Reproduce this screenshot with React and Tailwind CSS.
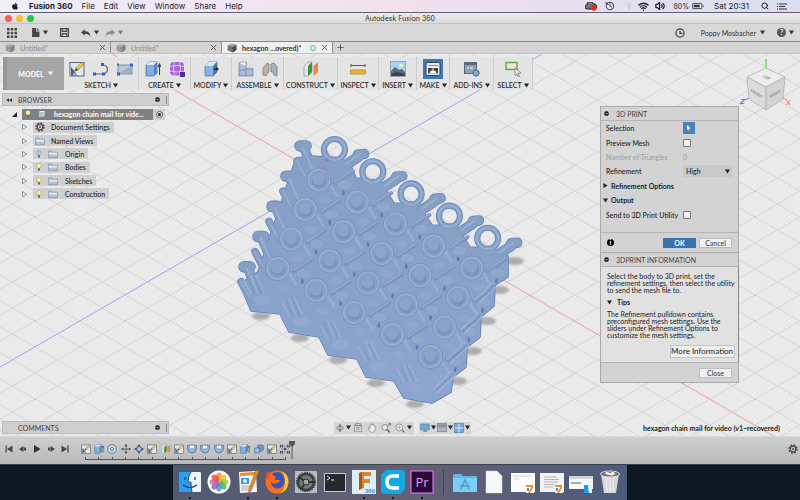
import { FaApple } from "react-icons/fa";
import { LuBluetooth, LuHistory, LuSearch, LuVolume2, LuWifi } from "react-icons/lu";

const Caret = ({ className = "" }) => (
  <svg viewBox="0 0 6 6" className={`w-[5px] h-[5px] shrink-0 ${className}`}>
    <path d="M0 .5h6L3 5.5z" fill="currentColor" />
  </svg>
);

// Every small icon is drawn on a 16 x 16 grid
const shapes = {
  sketch: (
    <>
      <rect x="1" y="1.5" width="14" height="13.5" fill="#dfe6ee" stroke="#5d6b7a" />
      <path d="M2 14.5V6l7 8.5z" fill="#4d6480" />
      <path d="M4 13h8" stroke="#fff" />
      <path d="M6 10l1-3 6-6 2 2-6 6z" fill="#f1c944" stroke="#8a6d1f" strokeWidth=".6" />
      <path d="M6 10l1-3 2 2z" fill="#333" />
    </>
  ),
  curve: (
    <>
      <path d="M1 13h8c7 0 7-9 1-9" fill="none" stroke="#555f70" strokeWidth="1.2" />
      <path d="M0 11.500h3v3H0zM9 11.500h3v3H9zM8 2h3v3H8z" fill="#2d62d0" />
    </>
  ),
  rect: (
    <>
      <rect x="1" y="4" width="14" height="9" fill="#bcc6d6" stroke="#8290a5" />
      <path d="M2 12L14 5v7z" fill="#a3b0c4" />
      <path d="M0 11.500h3v3H0zM13 2.500h3v3h-3zM0 2.500h2v2H0z" fill="#2d62d0" />
    </>
  ),
  extrude: (
    <>
      <path d="M1 4l3-3h8v11l-3 3H1z" fill="#7fb0e2" stroke="#41648c" strokeWidth=".7" />
      <path d="M1 4l3-3h8L9 4z" fill="#d9e9f8" />
      <path d="M9 4l3-3v11l-3 3z" fill="#5587bd" />
      <path d="M14.500 14V4M13 6l1.500-3L16 6" fill="none" stroke="#444" strokeWidth="1.1" />
    </>
  ),
  form: (
    <>
      <rect x="1" y="1" width="14" height="13.500" rx="4" fill="#a765dc" />
      <path d="M1 5.500q7-2 14 0M1 10q7 2 14 0M5.500 1q-2 7 0 13.500M10.500 1q2 7 0 13.500" fill="none" stroke="#e6c8fb" strokeWidth=".9" />
      <path d="M11 11h5v5h-5z" fill="#5a2c82" />
    </>
  ),
  modify: (
    <>
      <path d="M2 5l4-4h8v10l-4 4H2z" fill="#83b4e4" stroke="#4b6d92" strokeWidth=".7" />
      <path d="M2 5l4-4h8l-4 4z" fill="#dbe8f5" />
      <path d="M10 5l4-4v10l-4 4z" fill="#4678ad" />
      <path d="M11 8h4" stroke="#222" strokeWidth="1.400" />
      <path d="M13 6l3 2-3 2z" fill="#222" />
    </>
  ),
  assemble: (
    <>
      <path d="M1 2h7v6h7v7H1z" fill="#a9bfdc" stroke="#66798f" strokeWidth=".7" />
      <path d="M1 2l1-1h7l-1 1v6l1-1h6l-1 1" fill="#e9f0f8" stroke="#66798f" strokeWidth=".5" />
      <path d="M8 9v6M1 9h7" stroke="#66798f" strokeWidth=".7" />
    </>
  ),
  joint: (
    <>
      <path d="M1 14V7l4-5 2 1v7l-3 5z" fill="#c7ad9d" stroke="#707782" strokeWidth=".7" />
      <path d="M9 11V3l3-1 3 4v9l-3-1-1-3z" fill="#a9b2be" stroke="#68727e" strokeWidth=".7" />
    </>
  ),
  construct: (
    <>
      <path d="M1 5l4-4h4v10l-4 4H1z" fill="#e2e5e8" stroke="#808890" strokeWidth=".6" />
      <path d="M5 5l4-4v10l-4 4z" fill="#3f9145" />
      <path d="M10.500 5l4.500-4v10l-4.500 4z" fill="#ec8340" />
    </>
  ),
  inspect: (
    <>
      <path d="M1 4.500h14M1 3v3M15 3v3" stroke="#555" />
      <rect x=".5" y="9" width="15" height="4" fill="#efb72c" stroke="#9d7412" strokeWidth=".6" />
    </>
  ),
  insert: (
    <>
      <rect x=".5" y=".5" width="15" height="15" fill="#a9d2f4" stroke="#9aa3ab" />
      <circle cx="11" cy="4.500" r="1.800" fill="#fff6c8" />
      <path d="M1 10l4-4 4 3 3-1 3 3v4H1z" fill="#5d6873" />
      <path d="M1 13l6-2 8 2v2H1z" fill="#39424b" />
    </>
  ),
  make: (
    <>
      <rect x="1" y="1.500" width="14" height="13" rx="1.500" fill="#eceff1" stroke="#333c45" />
      <path d="M3 4.500h10" stroke="#8a949d" strokeWidth="1.200" />
      <path d="M3 7h10v5.500H3z" fill="#3b4753" />
      <path d="M8 7v3M5 12h6l-1-2H6z" stroke="#fff" strokeWidth=".8" fill="#fff" />
    </>
  ),
  addins: (
    <>
      <rect x=".5" y="1.500" width="12" height="11" fill="#93a0b1" stroke="#5a6675" />
      <path d="M.5 1.500h12V4H.5z" fill="#56687e" />
      <path d="M3 7h2M6 7h3" stroke="#fff" />
      <circle cx="12" cy="12" r="2.700" fill="#c8dcf2" stroke="#4f7cae" strokeWidth="1.400" />
      <path d="M12 8v8M8 12h8" stroke="#4f7cae" strokeWidth=".7" />
    </>
  ),
  select: (
    <>
      <rect x="1" y="1.500" width="11" height="7" fill="none" stroke="#66a636" strokeWidth="1.400" />
      <path d="M10 7l6 5-3 .3 1.500 3-1.300.7-1.500-3-1.700 1.500z" fill="#eee" stroke="#666" strokeWidth=".7" />
    </>
  ),
  move: (
    <>
      <path d="M8 2v12M2 8h12" stroke="#444" strokeWidth="1.300" strokeDasharray="4 1" />
      <path d="M8 0l2.500 3.500h-5zM8 16l2.500-3.500h-5zM0 8l3.500-2.500v5zM16 8l-3.500-2.500v5z" fill="#444" />
    </>
  ),
  orbitMove: (
    <>
      <circle cx="8" cy="8" r="4" fill="#a9c6e8" stroke="#35537b" strokeWidth="1.500" />
      <path d="M8 0l2.500 4h-5zM8 16l2.500-4h-5zM0 8l4-2.500v5zM16 8l-4-2.500v5z" fill="#35537b" />
    </>
  ),
  coil: (
    <>
      <circle cx="8" cy="8" r="6.500" fill="#e7f0fa" stroke="#476aa0" strokeWidth="1.400" />
      <circle cx="8" cy="8" r="3" fill="#cfe1f5" stroke="#476aa0" strokeWidth="1.400" />
    </>
  ),
  cut: (
    <>
      <path d="M1 2h14v6q-1 6-7 6.500Q2 14 1 8z" fill="#8fb7e3" stroke="#3f5f8b" />
      <path d="M4 2h8v4q-1 2-4 2T4 6z" fill="#f1f6fb" stroke="#3f5f8b" strokeWidth=".6" />
    </>
  ),
  combine: (
    <>
      <path d="M6 2q5-2 9 1v6l-4 3H6z" fill="#6c9bd3" stroke="#3f5f8b" />
      <path d="M1 7q4-2 8 0v6q-4 3-8 1z" fill="#9cc0e8" stroke="#3f5f8b" />
    </>
  ),
  pattern: (
    <>
      <path d="M3 3h10v10H3z" fill="none" stroke="#555" strokeDasharray="2 1.500" />
      <path d="M0 1h5v4H0zM11 1h5v4h-5zM0 11h5v4H0zM11 11h5v4h-5zM6 6h4v4H6z" fill="#3c4f68" />
      <path d="M1.500 2.500h2v1h-2zM12.500 2.500h2v1h-2zM1.500 12.500h2v1h-2zM12.500 12.500h2v1h-2z" fill="#dbe7f5" />
    </>
  ),
  folder: (
    <>
      <path d="M1 3h5l1 2h8v9H1z" fill="#b4c1d3" stroke="#6c7a8e" strokeWidth=".8" />
      <path d="M1.500 6h13v3h-13z" fill="#e4ebf3" />
    </>
  ),
  bulb: (
    <>
      <path d="M8 1c6 0 5 5 2.500 9h-5C3 6 2 1 8 1z" fill="#fff2a0" stroke="#8c7d3a" strokeWidth=".8" />
      <path d="M6 10.500h4V15H6z" fill="#666" />
    </>
  ),
  bulbOff: (
    <>
      <path d="M8 1c6 0 5 5 2.500 9h-5C3 6 2 1 8 1z" fill="#a8d0f5" stroke="#55769b" strokeWidth=".8" />
      <path d="M6 10.500h4V15H6z" fill="#666" />
    </>
  ),
  gear: (
    <>
      <circle cx="8" cy="8" r="6" fill="none" stroke="#4c4c4c" strokeWidth="3" strokeDasharray="2.700 2" />
      <circle cx="8" cy="8" r="4.500" fill="none" stroke="#4c4c4c" strokeWidth="2" />
      <circle cx="8" cy="8" r="1.500" fill="#4c4c4c" />
    </>
  ),
  cube: (
    <>
      <path d="M1 4l7-3 7 2v8l-6 4-8-3z" fill="#777" />
      <path d="M1 4l7-3 7 2-6 3z" fill="#a5a5a5" />
      <path d="M9 6l6-3v8l-6 4z" fill="#4c4c4c" />
    </>
  ),
  body: (
    <>
      <path d="M2 4l3-2h9v9l-3 3H2z" fill="#b8c5d4" />
      <path d="M2 4l3-2h9l-3 2z" fill="#f3f6f9" />
    </>
  ),
  grid: <path d="M0 0h4v4H0zM6 0h4v4H6zM12 0h4v4h-4zM0 6h4v4H0zM6 6h4v4H6zM12 6h4v4h-4zM0 12h4v4H0zM6 12h4v4H6zM12 12h4v4h-4z" fill="#444" />,
  file: <path d="M2 0h7v6h6v10H2zM10.500 0L15 4.500h-4.500z" fill="#444" />,
  save: <path d="M1 1h14v14H1zM4 1v5h8V1M4 15v-5h8v5" fill="none" stroke="#444" strokeWidth="2" />,
  undo: <path d="M0 7l6-5v3c6 0 9 3 9 9-2-4-5-5-9-5v3z" fill="#444" />,
  redo: <path d="M16 7l-6-5v3C4 5 1 8 1 14c2-4 5-5 9-5v3z" fill="#8b8b8b" />,
  close: <path d="M2 2l12 12M14 2L2 14" stroke="#555" strokeWidth="2.200" />,
  plus: <path d="M8 1v14M1 8h14" stroke="#555" strokeWidth="2" />,
  clock: (
    <>
      <circle cx="8" cy="8" r="6.500" fill="none" stroke="#444" strokeWidth="2" />
      <path d="M8 4v4.500h4" fill="none" stroke="#444" strokeWidth="1.800" />
    </>
  ),
  minus: (
    <>
      <rect x="1" y="1" width="14" height="14" rx="5" fill="#222" />
      <path d="M4 8h8" stroke="#ccc" strokeWidth="2" />
    </>
  ),
  rewind: <path d="M8 3v10L1 8zM16 3v10L9 8z" fill="#222" />,
  first: <path d="M1 1h2.500v14H1zM15 1v14L4 8z" fill="#444" />,
  prev: <path d="M9 2v12L0 8zM10 5h4v6h-4z" fill="#444" />,
  play: <path d="M2 0l13 8-13 8z" fill="#333" />,
  next: <path d="M7 2v12l9-6zM2 5h4v6H2z" fill="#444" />,
  last: <path d="M12.500 1H15v14h-2.500zM1 1v14l11-7z" fill="#444" />,
  orbit: (
    <>
      <ellipse cx="8" cy="8" rx="7" ry="3" fill="none" stroke="#666" strokeWidth="1.300" />
      <path d="M8 1v14M5.500 4L8 1l2.500 3M5.500 12L8 15l2.500-3" fill="none" stroke="#555" strokeWidth="1.300" />
    </>
  ),
  lookAt: (
    <>
      <rect x="2" y="4" width="12" height="10" fill="#dde2e8" stroke="#77808a" />
      <path d="M4 1h8v3H4zM4 7h8M4 10h8" fill="none" stroke="#77808a" strokeWidth="1.300" />
    </>
  ),
  pan: <path d="M5 9V3q1-1 2 0V1.500q1-1 2 0V3q1-1 2 0v2q1-1 2 0v6q-1 4-4 4-4 0-5-3L1.500 8Q3 6.500 5 9z" fill="#f2f2f2" stroke="#777" />,
  zoom: (
    <>
      <circle cx="6" cy="7" r="4.500" fill="#eef3f8" stroke="#777" strokeWidth="1.400" />
      <path d="M9.500 10.500L14 15" stroke="#555" strokeWidth="2" />
      <path d="M10 5l5-4M12 1h3v3" fill="none" stroke="#444" />
    </>
  ),
  fit: (
    <>
      <circle cx="7" cy="7" r="5.500" fill="#e7eef6" stroke="#8792a0" strokeWidth="1.400" />
      <path d="M11 11l4 4" stroke="#666" strokeWidth="2" />
      <path d="M4 7h6M7 4v6" stroke="#8ba7c6" strokeWidth="1.400" />
    </>
  ),
  monitor: (
    <>
      <rect x="1" y="1.500" width="14" height="9.500" rx="1" fill="#6ba5e2" stroke="#5f7f9f" />
      <path d="M6 11h4l1 3.500H5z" fill="#8190a0" />
    </>
  ),
  display: (
    <>
      <rect x="1" y="1" width="14" height="13" fill="#aeb4ba" stroke="#767c82" />
      <path d="M1.500 2h13v5h-13z" fill="#8d949b" />
    </>
  ),
  viewports: (
    <>
      <rect x="1" y="1" width="14" height="14" fill="#76a8df" stroke="#49709d" />
      <path d="M8 1v14M1 8h14" stroke="#e7f0fa" strokeWidth="1.500" />
    </>
  ),
};

const Icon = ({ name, className = "w-4 h-4" }) => (
  <svg viewBox="0 0 16 16" className={`shrink-0 ${className}`} aria-hidden="true">
    {shapes[name]}
  </svg>
);

const MenuBar = () => (
  <header className="h-[13px] shrink-0 flex items-center justify-between pl-[11px] pr-[13px] text-[8px] leading-none text-[#1d1c28] border-b border-[#625c78] bg-linear-to-r from-[#efeff8] via-[#f1e0ee] to-[#d9dff0] font-[Inter,sans-serif]">
    <nav className="flex items-center gap-[9px]">
      <FaApple className="w-2 h-2 mr-px" />
      <b className="font-bold">Fusion 360</b>
      {["File", "Edit", "View", "Window", "Share", "Help"].map((item) => (
        <button key={item}>{item}</button>
      ))}
    </nav>
    <div className="flex items-center text-[7px]">
      <svg viewBox="0 0 12 9" className="w-3 h-[9px] mr-2">
        <path d="M2 7a2 2 0 010-4 3 3 0 016-1 2.500 2.500 0 012 5z" fill="#777" stroke="#222" />
        <circle cx="9" cy="6" r="2.700" fill="#f0261c" />
      </svg>
      <LuHistory className="w-2.5 h-2.5 mr-2.5" />
      <LuBluetooth className="w-2 h-2 mr-[5px] opacity-20" />
      <LuWifi strokeWidth={3} className="w-[11px] h-[11px] mr-1.5" />
      <LuVolume2 strokeWidth={3} className="w-2.5 h-2.5 mr-2" />
      <span>80%</span>
      <svg viewBox="0 0 14 8" className="w-3 h-2 ml-[3px] mr-2.5">
        <rect x=".5" y="1" width="11" height="6" rx="1" fill="none" stroke="#333" />
        <path d="M2 2.500h7v3H2zM12.500 3h1v2h-1z" fill="#333" />
      </svg>
      <span className="text-[8px]">Sat 20:31</span>
      <LuSearch strokeWidth={3} className="w-2 h-2 ml-3 mr-2" />
      <svg viewBox="0 0 10 7" className="w-2.5 h-[7px]">
        <path d="M0 1h1M2 1h8M0 3.500h1M2 3.500h6M0 6h1M2 6h8" stroke="#333" strokeWidth="1.200" />
      </svg>
    </div>
  </header>
);

const TitleBar = () => (
  <div className="h-[11px] shrink-0 grid grid-cols-3 items-center px-[5px] bg-linear-to-b from-[#ebebeb] to-[#d9d9d9] border-b border-[#c4c4c4]">
    <div className="flex gap-1">
      <span className="w-[7px] h-[7px] rounded-full bg-[#fc5b57]" />
      <span className="w-[7px] h-[7px] rounded-full bg-[#fdbc2e]" />
      <span className="w-[7px] h-[7px] rounded-full bg-[#28c840]" />
    </div>
    <h1 className="text-center text-[7px] leading-none text-[#333] font-[Inter,sans-serif]">Autodesk Fusion 360</h1>
  </div>
);

const QuickBar = () => (
  <div className="h-[18px] shrink-0 flex items-center justify-between pl-[7px] pr-1.5 bg-[#d8d8d8] border-b border-[#8b8b8b] text-[#333]">
    <div className="flex items-center">
      <Icon name="grid" className="w-2.5 h-2.5 mr-3.5" />
      <Icon name="file" className="w-[9px] h-[9px] mr-[3px]" />
      <Caret />
      <Icon name="save" className="w-[9px] h-[9px] ml-3 mr-3" />
      <Icon name="undo" className="w-2.5 h-2.5 mr-[3px]" />
      <Caret />
      <Icon name="redo" className="w-2.5 h-2.5 ml-1.5 mr-[3px]" />
      <Caret className="text-[#777]" />
    </div>
    <div className="flex items-center">
      <Icon name="clock" className="w-2.5 h-2.5 mr-4" />
      <span className="mr-1">Poppy Mosbacher</span>
      <Caret />
      <span className="w-[9px] h-[9px] rounded-full bg-[#555] text-white font-bold text-center leading-[9px] ml-3 mr-[3px]">?</span>
      <Caret />
    </div>
  </div>
);

const Tab = ({ title, active }) => (
  <div
    className={`w-[111px] flex items-center pl-[5px] pr-1 border-r border-[#8e8e8e] ${
      active ? "bg-[#f0f0f0] text-[#333] font-bold" : "text-[#8b8b8b]"
    }`}
  >
    <Icon name="cube" className={`w-2.5 h-2.5 mr-[5px] ${active ? "" : "opacity-60"}`} />
    <span className="flex-1 whitespace-nowrap">{title}</span>
    {active && <span className="w-1.5 h-1.5 mr-[5px] rounded-full border border-[#3fc0a4]" />}
    <button aria-label="Close tab">
      <Icon name="close" className="w-[7px] h-[7px]" />
    </button>
  </div>
);

const groups = [
  { label: "SKETCH", icons: ["sketch", "curve", "rect"], width: "w-[75px]", gap: "gap-2" },
  { label: "CREATE", icons: ["extrude", "form"], width: "w-[52px]", gap: "gap-2" },
  { label: "MODIFY", icons: ["modify"], width: "w-[41px]" },
  { label: "ASSEMBLE", icons: ["assemble", "joint"], width: "w-[52px]", gap: "gap-2" },
  { label: "CONSTRUCT", icons: ["construct"], width: "w-[54px]" },
  { label: "INSPECT", icons: ["inspect"], width: "w-[41px]" },
  { label: "INSERT", icons: ["insert"], width: "w-[38px]" },
  { label: "MAKE", icons: ["make"], width: "w-[33px]", active: true },
  { label: "ADD-INS", icons: ["addins"], width: "w-[44px]" },
  { label: "SELECT", icons: ["select"], width: "w-[39px]" },
];

const Ribbon = () => (
  <div className="relative w-fit ml-[3px] mt-[3px] flex h-[33px] bg-[#e4e4e4]">
    <button className="w-[61px] flex items-center justify-center gap-1 bg-[#a6a6a6] text-white font-bold border-l-4 border-[#989898]">
      MODEL <Caret />
    </button>
    {groups.map((g) => (
      <div key={g.label} className={`${g.width} flex flex-col items-center justify-between pt-[2px] border-r border-[#cccccc]`}>
        <div className={`flex items-center p-[2px] ${g.gap || ""} ${g.active ? "bg-[#3d7ab5]" : ""}`}>
          {g.icons.map((icon) => (
            <Icon key={icon} name={icon} />
          ))}
        </div>
        <button className="flex items-center gap-[2px] leading-[9px] text-[#222] font-medium">
          {g.label} <Caret />
        </button>
      </div>
    ))}
  </div>
);

const PanelBar = ({ title, collapsed }) => (
  <div className="w-[167px] h-[13px] flex items-center bg-[#cfcfcf] border border-[#bcbcbc] text-[#444]">
    <span className="w-[15px] flex justify-center pr-1">{!collapsed && <Icon name="rewind" className="w-1.5 h-1.5" />}</span>
    <span className="flex-1">{title}</span>
    <Icon name="minus" className="w-[5px] h-[5px] mr-1.5" />
    <span className="w-px h-2 mr-px bg-[#888]" />
  </div>
);

const treeItems = [
  { label: "Document Settings", icon: "gear" },
  { label: "Named Views", icon: "folder" },
  { label: "Origin", icon: "folder", bulb: "bulbOff" },
  { label: "Bodies", icon: "folder", bulb: "bulb" },
  { label: "Sketches", icon: "folder", bulb: "bulb" },
  { label: "Construction", icon: "folder", bulb: "bulb" },
];

const BrowserTree = () => (
  <ul className="relative ml-3 mt-[2px] h-[92px] flex flex-col justify-between text-[#222] font-medium">
    <li className="flex items-center h-3">
      <svg viewBox="0 0 6 6" className="w-[5px] h-[5px] mr-[5px]">
        <path d="M6 0v6H0z" fill="#222" />
      </svg>
      <span className="w-[131px] h-[11px] flex items-center pl-[2px] bg-[#808080] text-white font-bold whitespace-nowrap">
        <Icon name="bulb" className="w-2 h-2 mr-1.5" />
        <Icon name="body" className="w-2 h-2 mr-2" />
        hexagon chain mail for vide...
      </span>
      <span className="w-3 h-[11px] flex items-center justify-center bg-[#cfcfcf]">
        <span className="w-[7px] h-[7px] rounded-full border border-[#777] bg-[#222] ring-1 ring-inset ring-white" />
      </span>
    </li>
    {treeItems.map((item) => (
      <li key={item.label} className="flex items-center h-3 pl-2.5">
        <svg viewBox="0 0 5 6" className="w-[5px] h-1.5 mr-1.5">
          <path d="M.5.5v5l4-2.500z" fill="#f5f5f5" stroke="#666" strokeWidth=".7" />
        </svg>
        <span className="h-[11px] flex items-center pl-[2px] pr-1 bg-[#d0d0d0]">
          {item.bulb && <Icon name={item.bulb} className="w-2 h-2 mr-[5px]" />}
          <Icon name={item.icon} className={item.bulb ? "w-2.5 h-2.5 mr-[7px]" : "w-2.5 h-2.5 mr-1.5"} />
          {item.label}
        </span>
      </li>
    ))}
  </ul>
);

// --- 3D viewport ---

const cols = [0, 1, 2, 3, 4];
const rows = [0, 1, 2, 3];

const BODY =
  "M296 158L312 156L341 158L352 168L356 178L380 181L394 203L418 204L432 225L456 226L470 247L494 249L508 256V277L495 285L494 306L481 317L480 337L467 347L466 367L453 377L451 392L432 403L404 398L394 381L366 377L357 359L328 355L319 337L289 332L280 314L251 311L240 284L258 272Z";

// Pegs and rings standing along the two upper edges
const Pegs = ({ extra, color }) => (
  <g stroke={color} fill="none" strokeLinecap="round">
    {cols.map((i) => (
      <g key={i}>
        <g transform={`translate(${i * 38.3} ${i * 22.2})`}>
          <circle cx="334.500" cy="149.500" r="10.500" strokeWidth={4.5 + extra} />
          <path d="M343 167L358 157" strokeWidth={9 + extra} />
          <path d="M358 154.500L364 154" strokeWidth={9 + extra} />
        </g>
        <g transform={`translate(${i * -14} ${i * 30.2})`}>
          <path d="M300 146L306 146" strokeWidth={10 + extra} />
          <path d="M304 148L314 172" strokeWidth={8 + extra} />
          <path d="M297 161L308 182" strokeWidth={6 + extra} />
        </g>
      </g>
    ))}
  </g>
);

const shadows = [
  [261, 316], [300, 338], [338, 360], [376, 383], [415, 404], [458, 381],
  [473, 351], [487, 321], [500, 290], [515, 261],
];

const ChainMail = () => (
  <g>
    <g filter="url(#soft)">
      {shadows.map(([x, y]) => (
        <ellipse key={x} cx={x} cy={y} rx="9" ry="4" fill="#aeaeb0" />
      ))}
    </g>
    <path d={BODY} fill="#5f7fb6" stroke="#5f7fb6" strokeWidth="1.600" strokeLinejoin="round" />
    <Pegs extra={1.6} color="#6886b9" />
    <path d={BODY} fill="url(#bodyFill)" />
    <Pegs extra={0} color="#869fc5" />
    {cols.map((i) => (
      <g key={i} fill="none" strokeLinecap="round">
        <g transform={`translate(${i * 38.3} ${i * 22.2})`} stroke="#9db3d5">
          <circle cx="334.500" cy="149.500" r="10.700" strokeWidth="1.300" />
          <path d="M346 164L360 154" strokeWidth="1.500" />
        </g>
        <g transform={`translate(${i * -14} ${i * 30.2})`} stroke="#9ab0d2">
          <path d="M303 148L313 170" strokeWidth="1.800" />
          <path d="M297 161L305 176" strokeWidth="1.300" />
        </g>
      </g>
    ))}
    {rows.map((r) =>
      cols.map((c) => (
        <g key={`${r}-${c}`} transform={`translate(${319 + c * 38.2 - r * 13.7} ${180 + c * 22 - r * -29.5})`} strokeLinecap="round" fill="none">
          <path d="M16 3L34 -9" stroke="#7c94bf" strokeWidth="4" />
          <path d="M16 2L34 -10" stroke="#98aed1" strokeWidth="1.500" />
          <path d="M12 6L18 16" stroke="#98aed1" strokeWidth="2.500" />
          <ellipse cx="26" cy="5" rx="7.500" ry="5" fill="#92a8cb" stroke="#829ac3" strokeWidth=".8" />
          <ellipse cx="6" cy="20" rx="6" ry="4" fill="#90a6ca" />
          <circle r="11.800" fill="#87a0c7" stroke="#7b94be" strokeWidth="1.200" />
          <circle r="10.700" stroke="#9ab0d2" strokeWidth="1.500" />
          <circle cy="1" r="7" fill="#7a93be" />
          <circle cx="-.5" cy="-1" r="6" fill="#8da4c9" />
          <path d="M24 10l2 2-1 4-2-2z" fill="#5f79ad" />
        </g>
      ))
    )}
    {cols.map((i) => (
      <g key={i} transform={`translate(${i * 38.3} ${i * 22.2})`} fill="none" strokeLinecap="round">
        <path d="M251 294L244 281M258 294L251 276M264 292L256 276" stroke="#9ab0d3" strokeWidth="1.600" />
        <path d="M254 293L248 279M261 293L254 277" stroke="#7a92be" strokeWidth=".8" />
        <ellipse cx="263" cy="300" rx="8" ry="5" fill="#92a9cf" />
      </g>
    ))}
    {rows.map((i) => (
      <g key={i} transform={`translate(${i * -13.7} ${i * 29.6})`} strokeLinecap="round">
        <path d="M475 300L492 283M478 304L496 287" stroke="#9cb2d4" strokeWidth="1.600" />
        <path d="M476 303L494 285" stroke="#728bb9" />
      </g>
    ))}
    <path d="M322 166q6 2 5 8M319 168q8 1 10 12" fill="none" stroke="#9a86c6" />
    <circle cx="327" cy="160" r="2" fill="#8f7ac0" />
  </g>
);

const ViewCube = () => (
  <g fontSize="5" fontFamily="Liberation Sans, sans-serif" fontWeight="bold">
    <path d="M766 59v10" stroke="#62e05c" strokeWidth="1.500" />
    <path d="M749 98l-4 2" stroke="#6c68e8" />
    <path d="M783 98l4 2" stroke="#f08080" />
    <g stroke="#aaa" strokeWidth=".7" strokeLinejoin="round">
      <path d="M766 68L747 77L766 87L785 77Z" fill="#ededed" />
      <path d="M747 77L766 87V110L749 99Z" fill="#dcdcdc" />
      <path d="M785 77L766 87V110L783 99Z" fill="#d3d3d3" />
    </g>
    <g fill="#8c8c8c" textAnchor="middle">
      <text fontSize="4" transform="translate(766 79) rotate(18)">TOP</text>
      <text fontSize="4" transform="translate(756 95) rotate(30)">FRONT</text>
      <text fontSize="4" transform="translate(776 95) rotate(-30)">RIGHT</text>
    </g>
    <text x="740" y="104" fontSize="8" fontStyle="italic" fill="#6c68e8">Z</text>
    <text x="786" y="105" fontSize="7" fill="#f08080">X</text>
  </g>
);

const Scene = () => (
  <svg viewBox="0 54 800 382" preserveAspectRatio="xMidYMid slice" className="absolute inset-0 w-full h-full">
    <defs>
      <pattern id="minor" width="4.5" height="2.6" x="327.500" y="178" patternUnits="userSpaceOnUse">
        <path d="M0 0l4.500 2.600M4.500 0L0 2.600" stroke="#dadada" strokeWidth=".4" />
      </pattern>
      <pattern id="major" width="45" height="26" x="327.500" y="178" patternUnits="userSpaceOnUse">
        <path d="M0 0l45 26M45 0L0 26" stroke="#cbcbcb" strokeWidth=".7" />
      </pattern>
      <linearGradient id="bodyFill" x1="0" y1="0" x2="0" y2="1">
        <stop offset="0" stopColor="#869fc5" />
        <stop offset="1" stopColor="#8ca5cf" />
      </linearGradient>
      <filter id="soft">
        <feGaussianBlur stdDeviation="1" />
      </filter>
    </defs>
    <rect y="54" width="800" height="382" fill="#f0f0f0" />
    <rect y="54" width="800" height="382" fill="url(#minor)" />
    <rect y="54" width="800" height="382" fill="url(#major)" />
    <path d="M112 54L775 437" stroke="#f5a3a3" strokeWidth=".9" />
    <path d="M542 54L0 367" stroke="#a4a4ee" strokeWidth=".9" />
    <ChainMail />
    <ViewCube />
  </svg>
);

// --- Right-hand dialogs ---

const DialogTitle = ({ children }) => (
  <h2 className="h-3.5 flex items-center pl-[3px] gap-[7px] border-b border-[#b5b5b5] text-[#444]">
    <Icon name="minus" className="w-[5px] h-[5px]" />
    {children}
  </h2>
);

const Check = ({ id }) => (
  <input
    id={id}
    type="checkbox"
    className="appearance-none w-2 h-2 rounded-[1px] border border-[#777] bg-[#f3f3f3] checked:bg-[#3d7ab5]"
  />
);

const plainButton = "h-[10px] flex items-center justify-center border border-[#bdbdbd] bg-[#f0f0f0] text-[#333]";

const PrintDialog = () => (
  <form className="bg-[#d3d3d3] border border-[#a9a9a9]">
    <DialogTitle>3D PRINT</DialogTitle>
    <div className="h-[111px] text-[#222] font-medium">
      <div className="h-[101px] grid grid-rows-7 *:pl-[5px] *:grid *:grid-cols-[77px_1fr] *:items-center">
        <div>
          <span>Selection</span>
          <button type="button" aria-label="Selection" className="w-3 h-3 flex items-center justify-center bg-[#4784be]">
            <svg viewBox="0 0 8 10" className="w-1.5 h-2">
              <path d="M1 0l6 6-3 .3L5.500 9.500 4 10 2.700 7 1 8.500z" fill="#fff" stroke="#444" strokeWidth=".5" />
            </svg>
          </button>
        </div>
        <div>
          <label htmlFor="preview">Preview Mesh</label>
          <Check id="preview" />
        </div>
        <div className="text-[#a0a0a0] font-normal">
          <span>Number of Triangles</span>
          <span>0</span>
        </div>
        <div>
          <label htmlFor="refinement">Refinement</label>
          <span className="relative w-[49px] flex items-center bg-[#c9c9c9]">
            <select id="refinement" defaultValue="High" className="appearance-none w-full h-3 pl-[3px]">
              <option>High</option>
              <option>Medium</option>
              <option>Low</option>
            </select>
            <Caret className="absolute right-[2px] pointer-events-none" />
          </span>
        </div>
        <div>
          <button type="button" className="-ml-[3px] flex items-center gap-[3px] whitespace-nowrap font-bold">
            <Caret className="-rotate-90" /> Refinement Options
          </button>
        </div>
        <div>
          <button type="button" className="-ml-[3px] flex items-center gap-[3px] font-bold">
            <Caret /> Output
          </button>
        </div>
        <div>
          <label htmlFor="utility" className="whitespace-nowrap">Send to 3D Print Utility</label>
          <Check id="utility" />
        </div>
      </div>
    </div>
    <div className="h-5 flex items-center gap-[3px] px-1.5 border-t border-[#b5b5b5]">
      <span className="w-[7px] h-[7px] mr-auto rounded-full bg-black text-white text-center leading-[7px] font-bold">i</span>
      <button type="submit" className="w-[33px] h-[10px] flex items-center justify-center bg-[#3672ae] text-white font-bold">OK</button>
      <button type="button" className={`w-[33px] ${plainButton}`}>Cancel</button>
    </div>
  </form>
);

const InfoDialog = () => (
  <section className="bg-[#d3d3d3] border border-t-0 border-[#a9a9a9]">
    <DialogTitle>3DPRINT INFORMATION</DialogTitle>
    <div className="h-[95px] flex bg-[#e1e1e1] text-[#222] leading-[7px]">
      <div className="flex-1 flex flex-col pt-1.5 pl-1.5 pr-[3px] whitespace-nowrap">
        <p>
          Select the body to 3D print, set the<br />
          refinement settings, then select the utility<br />
          to send the mesh file to.
        </p>
        <h3 className="flex items-center gap-[5px] my-[5px] font-bold">
          <Caret /> Tips
        </h3>
        <p>
          The Refinement pulldown contains<br />
          preconfigured mesh settings. Use the<br />
          sliders under Refinement Options to<br />
          customize the mesh settings.
        </p>
        <button className="self-end w-[65px] h-[13px] mt-[6px] border border-[#c2c2c2] bg-[#efefef] text-[8px]">More Information</button>
      </div>
      <div className="w-[3px] bg-[#858585]" />
    </div>
    <div className="h-5 flex items-center justify-end px-1.5 border-t border-[#b5b5b5]">
      <button className={`w-[33px] ${plainButton}`}>Close</button>
    </div>
  </section>
);

const NavBar = () => (
  <div className="flex items-center gap-[5px] pr-2 text-[#222]">
    <div className="h-3 flex items-center gap-1 px-[2px] bg-[#d6d6d6]">
      <div className="flex items-center gap-[2px]">
        <Icon name="orbit" className="w-2 h-2" />
        <Caret />
        <Icon name="lookAt" className="w-2.5 h-2.5" />
      </div>
      <Icon name="pan" className="w-2.5 h-2.5" />
      <Icon name="zoom" className="w-2.5 h-2.5" />
      <div className="flex items-center gap-[2px]">
        <Icon name="fit" className="w-2.5 h-2.5" />
        <Caret />
      </div>
    </div>
    <div className="h-3 flex items-center gap-px px-px bg-[#d6d6d6]">
      {["monitor", "display", "viewports"].map((name) => (
        <span key={name} className="flex items-center gap-px">
          <Icon name={name} className="w-2.5 h-2.5" />
          <Caret />
        </span>
      ))}
    </div>
  </div>
);

const timeline = [
  "sketch", "extrude", "coil", "move", "orbitMove", "sketch", "construct", "sketch",
  "cut", "cut", "cut", "sketch", "extrude", "combine", "sketch", "pattern",
];

const Timeline = () => (
  <div className="h-7 shrink-0 flex items-start pt-1 pl-[5px] pr-[2px] bg-linear-to-b from-[#cfcfcf] to-[#b9b9b9] border-t border-[#d8d8d8]">
    <div className="h-4 flex items-center gap-[6px]">
      {["first", "prev", "play", "next", "last"].map((name) => (
        <button key={name} aria-label={name}>
          <Icon name={name} className="w-2 h-2" />
        </button>
      ))}
    </div>
    <div className="w-[213px] ml-2.5">
      <div className="h-4 flex items-center justify-around">
        {timeline.map((name, i) => (
          <Icon key={i} name={name} className="w-2.5 h-2.5" />
        ))}
      </div>
      <div className="h-[3px] mx-1.5 flex justify-between border-b border-[#555]">
        {timeline.map((name, i) => (
          <span key={i} className="w-px h-full bg-[#555]" />
        ))}
      </div>
    </div>
    <svg viewBox="0 0 6 18" className="w-1.5 h-[18px] -ml-[3px]">
      <path d="M0 0h6v3L3 6 0 3z" fill="#555" />
      <path d="M3 4v14" stroke="#555" />
    </svg>
    <button aria-label="Timeline settings" className="ml-auto h-4 flex items-center">
      <Icon name="gear" className="w-2.5 h-2.5" />
    </button>
  </div>
);

// --- Dock, icons on a 24 x 24 grid ---

const petals = ["#f6921e", "#f4c21b", "#a5c93d", "#4eb35e", "#48a1d8", "#7a6cc0", "#c66bb0", "#ee4d4d"];

const PagesMark = () => (
  <g>
    <rect x="15" y="15" width="8" height="8" fill="#fff" />
    <path d="M15 15h7v2h-7z" fill="#f4901e" />
    <path d="M17 23l4-7 1.500 1L19 23z" fill="#e98b22" />
    <path d="M16 18h2v3h-2z" fill="#3b8fe0" />
  </g>
);

const dockIcons = {
  finder: (
    <>
      <rect x="1" y="2" width="22" height="20" rx="1" fill="#eef3f8" />
      <path d="M2 2h11q-3 5-3 10h3q0 6 1 10H2q-1 0-1-1V3q0-1 1-1z" fill="#2b9df2" />
      <path d="M7 7v3M17 7v3M5 15q7 5 14 0" fill="none" stroke="#1b3550" strokeWidth="1.200" />
      <path d="M13 2q-3 5-3 10h3q0 6 1 10" fill="none" stroke="#1b3550" strokeWidth=".8" />
    </>
  ),
  photos: (
    <>
      <circle cx="12" cy="12" r="11.500" fill="#fbfbfb" />
      {petals.map((color, i) => (
        <ellipse key={color} cx="12" cy="7" rx="3" ry="4.500" fill={color} opacity=".85" transform={`rotate(${i * 45} 12 12)`} />
      ))}
    </>
  ),
  pages: (
    <>
      <path d="M3 2l17-1 1 21-17 1z" fill="#fafafa" />
      <path d="M4 3l15-1v3L4 6z" fill="#f08a24" />
      <path d="M5 8h8v6H5z" fill="#3f95e4" />
      <circle cx="9" cy="11" r="2" fill="#d8ecff" />
      <path d="M5 16h9M5 18h9M5 20h7" stroke="#aaa" />
      <path d="M20 0l3 1-8 20-2 2-.5-3z" fill="#ed8a25" stroke="#8b5a20" strokeWidth=".5" />
    </>
  ),
  firefox: (
    <>
      <circle cx="12" cy="12" r="11.500" fill="#ff6a1c" />
      <path d="M17 1q7 4 6.500 12-1 8-9 10.500 5-4 5.500-10Q20 6 17 1z" fill="#ffc72c" />
      <path d="M1 8q0-4 2-7 1 2 3 3l-3 6z" fill="#ff4a2a" />
      <path d="M7 4q5-4 10 0 4 5 2 10-3 6-9 4-4-2-4-6 3 3 6 1 2-1 4-2-4-2-6-1-1-2 1-3-3-1-4-3z" fill="#2f55c4" />
    </>
  ),
  settings: (
    <>
      <rect x="1" y="1" width="22" height="22" rx="1" fill="#b7bcc1" />
      <circle cx="12" cy="12" r="8" fill="#777b80" stroke="#3c3f43" strokeWidth="2.500" />
      <circle cx="12" cy="12" r="9.500" fill="none" stroke="#3c3f43" strokeWidth="1.300" strokeDasharray="1.500 1" />
      <path d="M12 12L5 7M12 12h8M12 12l-5 7" stroke="#2c2f33" strokeWidth="1.800" />
      <circle cx="12" cy="12" r="3" fill="#a2a6aa" stroke="#2c2f33" />
    </>
  ),
  terminal: (
    <>
      <rect x="1" y="3" width="22" height="19" rx="1" fill="#c8ccd0" />
      <rect x="2" y="4" width="20" height="17" fill="#25282c" />
      <path d="M4 6l3 2-3 2M8 10h3" fill="none" stroke="#f2f2f2" />
    </>
  ),
  fusion: (
    <>
      <rect x="0" y="0" width="24" height="24" fill="#dbeefa" />
      <path d="M7 3l3-1h9v4h-7v3h6v4h-6v5l-5 2z" fill="#e0812d" />
      <path d="M7 3l3-1v16l-3 2z" fill="#a9541a" />
      <text x="13" y="22.500" fontSize="6" fontWeight="bold" fill="#3b95cf" fontFamily="Liberation Sans, sans-serif">360</text>
    </>
  ),
  cura: (
    <>
      <path d="M5 0h17l2 2v17l-5 5H2l-2-2V5z" fill="#14a7e2" />
      <path d="M18 6h-6q-6 0-6 6t6 6h6" fill="none" stroke="#fff" strokeWidth="3.600" />
    </>
  ),
  premiere: (
    <>
      <rect x="1" y="1" width="22" height="22" fill="#2b0a34" stroke="#d86ee8" strokeWidth="1.200" />
      <text x="12" y="16.500" fontSize="13" textAnchor="middle" fill="#e79df2" fontFamily="Open Sans, sans-serif">Pr</text>
    </>
  ),
  apps: (
    <>
      <path d="M0 4h8l2 2h14v16H0z" fill="#57b9e6" />
      <path d="M0 8h24v14H0z" fill="#7ccdf2" />
      <path d="M8 19l4-9 4 9M7 16h10" fill="none" stroke="#4b9fc9" strokeWidth="1.500" />
    </>
  ),
  document: <path d="M4 1h11l5 5v17H4z" fill="#f8f8f8" stroke="#d7d7d7" strokeWidth=".5" />,
  sheetOne: (
    <>
      <rect x="0" y="3" width="24" height="19" fill="#fcfcfc" />
      <path d="M2 6h18M3 9h5" stroke="#c4c4c4" strokeWidth=".8" />
      <PagesMark />
    </>
  ),
  sheetTwo: (
    <>
      <rect x="0" y="3" width="24" height="19" fill="#f3f3f3" />
      <path d="M4 7h13M4 9.500h15M4 12h14M4 14.500h10M4 17h9" stroke="#a4a4a4" strokeWidth=".8" />
      <PagesMark />
    </>
  ),
  finderWindow: (
    <>
      <rect x="0" y="6" width="24" height="13" fill="#f5f7f9" />
      <path d="M0 6h24v3H0z" fill="#ced3dc" />
      <path d="M2 12h10v2H2z" fill="#9eadc4" />
      <rect x="15" y="15" width="8" height="8" fill="#2496f0" />
      <path d="M19 15h4v8h-3q-1-4-1-8z" fill="#e8f2fa" />
    </>
  ),
  trash: (
    <>
      <path d="M3 4h18l-3 19H6z" fill="#d5d7d9" />
      <path d="M8 6l1 16M12 6v16M16 6l-1 16" stroke="#f4f4f4" />
      <ellipse cx="12" cy="4" rx="9.500" ry="3" fill="#686763" stroke="#e6e6e6" />
      <path d="M6 4l3-3 3 2 3-2 3 3-4 2z" fill="#f0f0ed" stroke="#666" strokeWidth=".5" />
    </>
  ),
};

const DockItem = ({ name, running }) => (
  <button aria-label={name} className="flex flex-col items-center gap-[3px]">
    <svg viewBox="0 0 24 24" className="w-6 h-6">
      {dockIcons[name]}
    </svg>
    <span className={`w-[2px] h-[2px] rounded-full ${running ? "bg-black" : ""}`} />
  </button>
);

const running = ["finder", "pages", "firefox", "fusion", "cura", "premiere"];

const Dock = () => (
  <footer className="h-9 shrink-0 flex justify-center bg-[#0d1723] border-t border-[#39414d]">
    <div className="flex items-end gap-[5px] px-[5px] pb-px bg-linear-to-r from-[#4f5a70] via-[#655f73] to-[#4c5c7c]">
      {["finder", "photos", "pages", "firefox", "settings", "terminal", "fusion", "cura", "premiere"].map((name) => (
        <DockItem key={name} name={name} running={running.includes(name)} />
      ))}
      <span className="w-px self-stretch my-1 mx-1 bg-[#3c4559]" />
      {["apps", "document", "sheetOne", "sheetTwo", "finderWindow", "trash"].map((name) => (
        <DockItem key={name} name={name} />
      ))}
    </div>
  </footer>
);

const App = () => {
  return (
    <div className="min-h-screen flex flex-col overflow-hidden text-[7px] leading-[8px] font-[Lato,'Open_Sans',sans-serif]">
      <MenuBar />
      <TitleBar />
      <QuickBar />
      <div className="h-3 shrink-0 flex bg-[#d4d4d4] border-b border-[#c2c2c2]">
        <Tab title="Untitled*" />
        <Tab title="Untitled*" />
        <Tab title="hexagon ...overed)*" active />
        <button aria-label="New tab" className="pl-1">
          <Icon name="plus" className="w-[7px] h-[7px]" />
        </button>
      </div>

      <main className="relative flex-1 flex flex-col">
        <Scene />
        <Ribbon />
        <div className="relative ml-[2px] mt-[3px]">
          <PanelBar title="BROWSER" />
        </div>
        <BrowserTree />

        {/* Floating command dialogs */}
        <aside className="absolute right-[61px] top-[52px] w-[139px]">
          <PrintDialog />
          <InfoDialog />
        </aside>

        <div className="relative mt-auto mb-[2px] pl-[2px] pr-5 flex items-center justify-between">
          <PanelBar title="COMMENTS" collapsed />
          <NavBar />
          <b className="text-[#222]">hexagon chain mail for video (v1~recovered)</b>
        </div>
      </main>

      <Timeline />
      <Dock />
    </div>
  );
};

export default App;
